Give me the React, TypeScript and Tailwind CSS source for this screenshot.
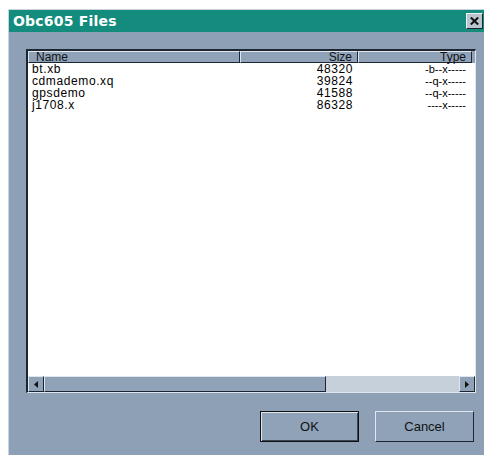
import React from "react"

const files = [
  { name: "bt.xb", size: "48320", type: "-b--x-----" },
  { name: "cdmademo.xq", size: "39824", type: "--q-x-----" },
  { name: "gpsdemo", size: "41588", type: "--q-x-----" },
  { name: "j1708.x", size: "86328", type: "----x-----" },
]

function HeaderCell({ label, width, right }: { label: string; width: string; right?: boolean }) {
  return (
    <div
      className={`${width} h-full shrink-0 border-t border-l border-t-[#dfe6ee] border-l-[#dfe6ee] border-r border-b border-r-[#1d2530] border-b-[#1d2530] flex items-center ${right ? "justify-end px-[5px]" : "px-[7px]"}`}
    >
      {label}
    </div>
  )
}

function ArrowButton({ dir }: { dir: "left" | "right" }) {
  return (
    <div className="w-[16px] h-full shrink-0 bg-[#8fa2b8] border-t border-l border-t-[#dfe6ee] border-l-[#dfe6ee] border-r border-b border-r-[#1d2530] border-b-[#1d2530] flex items-center justify-center">
      <svg width="4" height="7" viewBox="0 0 4 7">
        {dir === "left" ? <path d="M4 0 L0 3.5 L4 7 Z" fill="#111" /> : <path d="M0 0 L4 3.5 L0 7 Z" fill="#111" />}
      </svg>
    </div>
  )
}

export default function App() {
  return (
    <div className="w-[484px] h-[457px] bg-white overflow-hidden font-['Liberation_Sans',Arial,sans-serif] text-[12px] text-black">
      <div className="ml-[8px] mt-[9px] w-[480px] h-[446px] bg-[#8da0b6] border-l border-t border-[#c9d3de] flex flex-col">
        {/* title bar */}
        <div className="h-[22px] bg-[#138b7d] flex items-center justify-between pl-[4px] pr-[5px]">
          <span className="font-['DejaVu_Sans',sans-serif] font-bold text-[14px] text-white tracking-[0.2px]">Obc605 Files</span>
          <div className="w-[17px] h-[16px] bg-[#b9c4cf] border-t border-l border-[#eef2f6] border-r border-b border-r-[#1d2530] border-b-[#1d2530] flex items-center justify-center">
            <svg width="9" height="8" viewBox="0 0 9 8">
              <path d="M0.8 0.5 L8.2 7.5 M8.2 0.5 L0.8 7.5" stroke="#111" strokeWidth="2" />
            </svg>
          </div>
        </div>

        {/* file list */}
        <div className="ml-[17px] mt-[17px] w-[450px] h-[344px] border-t-2 border-l-2 border-t-[#1d2530] border-l-[#1d2530] border-r border-b border-r-[#dfe6ee] border-b-[#dfe6ee] flex flex-col bg-white">
          <div className="flex-1 overflow-hidden">
            <div className="h-[12px] flex bg-[#8fa2b8] text-[#111] leading-none">
              <HeaderCell label="Name" width="w-[212px]" />
              <HeaderCell label="Size" width="w-[118px]" right />
              <HeaderCell label="Type" width="w-[114px]" right />
            </div>
            <div>
              {files.map((f) => (
                <div key={f.name} className="flex h-[12px] items-center leading-[12px] tracking-[0.6px]">
                  <div className="w-[212px] px-[4px]">{f.name}</div>
                  <div className="w-[118px] px-[5px] text-right">{f.size}</div>
                  <div className="w-[114px] px-[6px] text-right text-[11px] tracking-[0px]">{f.type}</div>
                </div>
              ))}
            </div>
          </div>

          {/* horizontal scrollbar */}
          <div className="h-[16px] flex bg-[#c6d0da]">
            <ArrowButton dir="left" />
            <div className="w-[282px] h-full bg-[#8fa2b8] border-t border-l border-t-[#dfe6ee] border-l-[#dfe6ee] border-r border-b border-r-[#1d2530] border-b-[#1d2530]" />
            <div className="flex-1" />
            <ArrowButton dir="right" />
          </div>
        </div>

        {/* buttons */}
        <div className="mt-[18px] flex justify-end gap-[16px] pr-[14px]">
          <button className="w-[99px] h-[31px] bg-[#8fa2b8] border border-[#111] shadow-[inset_1px_1px_0_#dfe6ee,inset_-1px_-1px_0_#3a4656] text-[13px] text-[#111]">
            OK
          </button>
          <button className="w-[99px] h-[31px] bg-[#8fa2b8] border-t border-l border-t-[#dfe6ee] border-l-[#dfe6ee] border-r border-b border-r-[#1d2530] border-b-[#1d2530] text-[13px] text-[#111]">
            Cancel
          </button>
        </div>
      </div>
    </div>
  )
}
